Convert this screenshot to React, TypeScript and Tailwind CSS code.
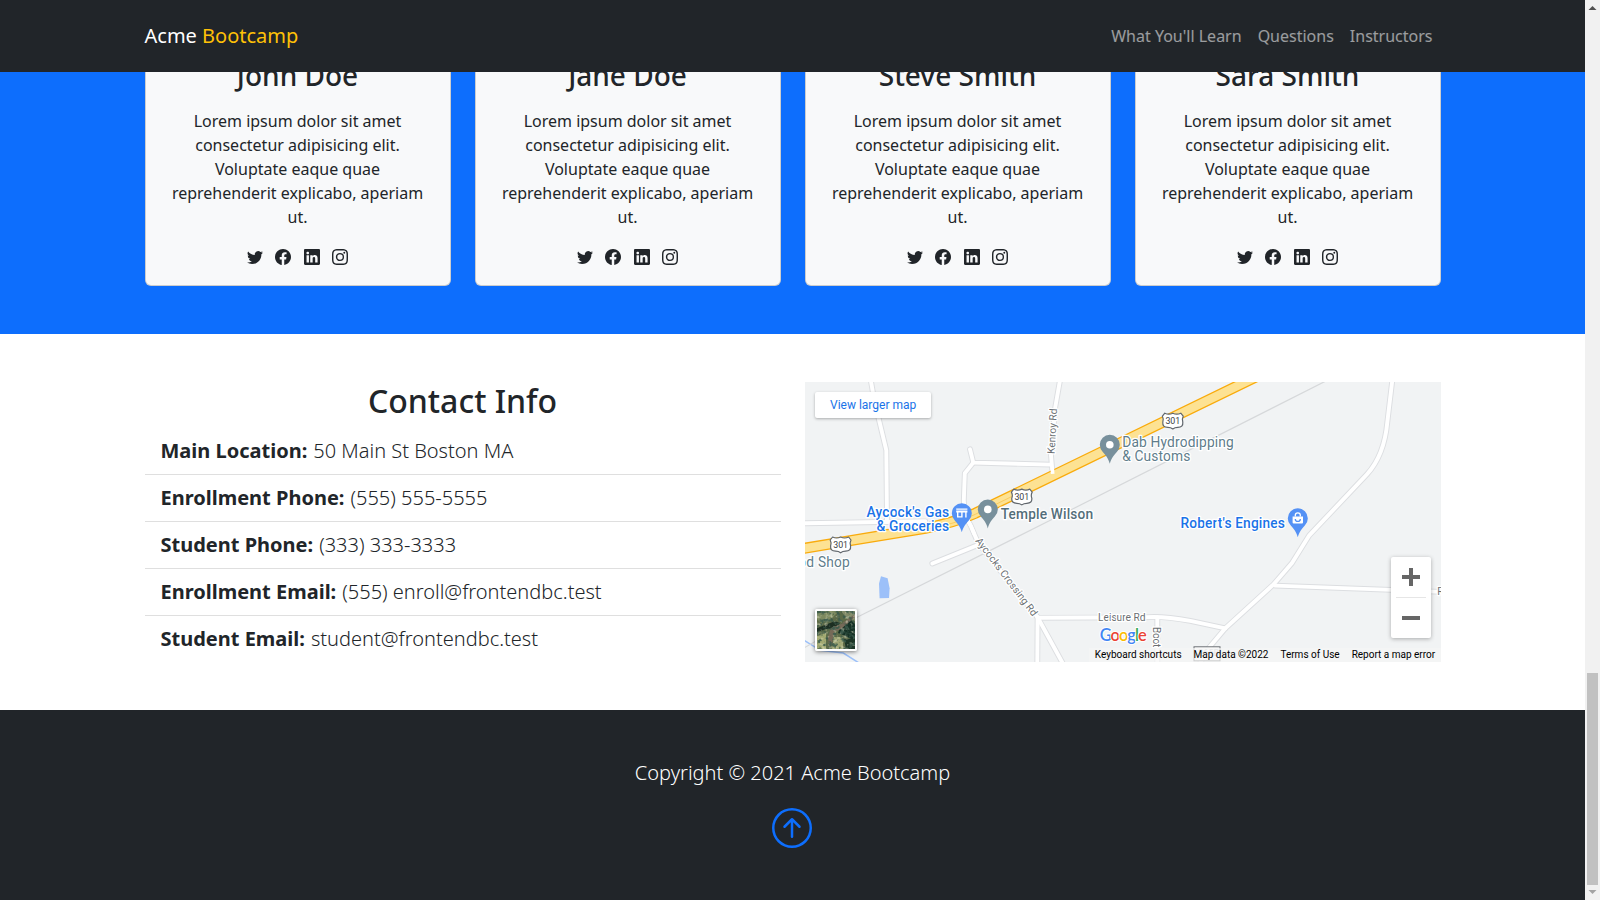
import React from "react";
import { BsTwitter, BsFacebook, BsLinkedin, BsInstagram, BsArrowUpCircle } from "react-icons/bs";

const navLinks = ["What You'll Learn", "Questions", "Instructors"];
const instructors = ["John Doe", "Jane Doe", "Steve Smith", "Sara Smith"];
const contacts = [
  ["Main Location:", "50 Main St Boston MA"],
  ["Enrollment Phone:", "(555) 555-5555"],
  ["Student Phone:", "(333) 333-3333"],
  ["Enrollment Email:", "(555) enroll@frontendbc.test"],
  ["Student Email:", "student@frontendbc.test"],
];

function Navbar() {
  return (
    <header className="z-10 h-[72px] shrink-0 bg-[#212529]">
      <div className="mx-auto flex h-full w-[1320px] items-center justify-between px-3">
        <a className="text-xl leading-[30px] text-white">
          Acme <span className="text-[#ffc107]">Bootcamp</span>
        </a>
        <nav className="flex">
          {navLinks.map((l) => (
            <a key={l} className="p-2 text-base leading-6 text-white/55">
              {l}
            </a>
          ))}
        </nav>
      </div>
    </header>
  );
}

function InstructorCard({ name }: { name: string }) {
  return (
    <div className="rounded-[6px] border border-black/[.175] bg-[#f8f9fa] bg-clip-border p-4 text-center">
      <h3 className="mb-4 text-[28px] leading-[33.6px] font-medium">{name}</h3>
      <p className="mb-4 px-[7px] text-base leading-6">
        Lorem ipsum dolor sit amet consectetur adipisicing elit. Voluptate eaque quae reprehenderit explicabo, aperiam
        ut.
      </p>
      <div className="flex h-6 items-center justify-center gap-[12.16px]">
        <BsTwitter />
        <BsFacebook />
        <BsLinkedin />
        <BsInstagram />
      </div>
    </div>
  );
}

const minorRoads = [
  "M870.5 380 L874 400 L886 450 L886.7 521.5",
  "M800 523 L925 521",
  "M969.7 449 L973 462.3 L1050 464.3",
  "M973 462.3 L964.5 473 L963.5 500 Q964 515 970.7 526 L978 543 L1037.3 617 L1063 664",
  "M1059.7 380 L1055 406.7 L1050.7 455 L1052.3 473",
  "M932 563.2 L977 545",
  "M1037.3 617 L1037 664",
  "M1037.3 617.5 L1145 617 Q1162 615.5 1190 620.5 L1225 628",
  "M1157 617 L1157 664",
  "M1392 380 L1387 422 Q1384 455 1366.7 474 L1309 535 L1291.7 562.7 L1273.3 584 L1225 628 L1209 647 L1199 664",
  "M1275 585.3 L1391 589.6 L1445 591.7",
];

const highway = "M795 549.5 L850 540.3 L925 528 Q955 522 975 513 L1260 374.5";

function Shield({ x, y }: { x: number; y: number }) {
  return (
    <g transform={`translate(${x} ${y})`}>
      <path
        d="M-8 -8 Q-4 -6 0 -8 Q4 -6 8 -8 L10.4 -5 Q8.8 -2 10 1 Q10.5 6.2 5 6.2 Q2 6.2 0 7.8 Q-2 6.2 -5 6.2 Q-10.5 6.2 -10 1 Q-8.8 -2 -10.4 -5 Z"
        fill="#fff"
        stroke="#60666c"
        strokeWidth="1.2"
        strokeLinejoin="round"
      />
      <text y="3.1" textAnchor="middle" fontSize="8.8" fill="#3c4043" textLength="14.6">
        301
      </text>
    </g>
  );
}

function Pin({ x, y, color, children }: { x: number; y: number; color: string; children: React.ReactNode }) {
  return (
    <g transform={`translate(${x} ${y})`}>
      <path d="M0 19 C-1.6 13 -4 11 -7 7.2 A10 10 0 1 1 7 7.2 C4 11 1.6 13 0 19 Z" fill={color} />
      {children}
    </g>
  );
}

function MapDrawing() {
  return (
    <svg className="block h-full w-full" viewBox="804.7 381.7 636 280" fontFamily="Roboto, sans-serif">
      <rect x="800" y="380" width="650" height="290" fill="#f1f3f4" />
      <path d="M880.7 576 L887.3 578 L889.3 588 L888.7 597.7 L879.3 598 L878.7 583.3 Z" fill="#9cc0f9" />
      <path d="M803 639.5 L820 650 L843 652.7 L860 663.5" fill="none" stroke="#9cc0f9" strokeWidth="1.5" />
      <path d="M803 648 L857.3 616.7 L1050 520 L1325 381" fill="none" stroke="#d6d8da" strokeWidth="1.2" />
      <g fill="none" stroke="#dcdee1" strokeWidth="5.8" strokeLinecap="round" strokeLinejoin="round">
        {minorRoads.map((d) => (
          <path key={d} d={d} />
        ))}
      </g>
      <g fill="none" stroke="#fff" strokeWidth="3.9" strokeLinecap="round" strokeLinejoin="round">
        {minorRoads.map((d) => (
          <path key={d} d={d} />
        ))}
      </g>
      <path d={highway} fill="none" stroke="#f9ab0c" strokeWidth="11" />
      <path d={highway} fill="none" stroke="#fde293" strokeWidth="8.4" />
      <path d="M925 529 Q955 524 975 514 L1012 496" fill="none" stroke="#f9c85a" strokeWidth="0.9" />
      <path d="M1052 467 L1052.4 473.5" stroke="#fff" strokeWidth="3.6" />
      <path d="M967 518 Q968 522 970.7 526 L974 534" fill="none" stroke="#fff" strokeWidth="3.6" />
      <Shield x={840.3} y={544.7} />
      <Shield x={1021.5} y={496.8} />
      <Shield x={1172.5} y={420.9} />

      <g stroke="#fff" strokeWidth="2.6" strokeLinejoin="round" paintOrder="stroke" fontSize="13.8">
        <g fill="#1a73e8" fontWeight="500" textAnchor="end">
          <text x="948.8" y="516.3" textLength="82.5">Aycock's Gas</text>
          <text x="948.8" y="530.3" textLength="72.5">&amp; Groceries</text>
          <text x="1284.6" y="528" textLength="104.5">Robert's Engines</text>
        </g>
        <text x="1000.4" y="519" textLength="92.5" fontWeight="500" fill="#546e7a">Temple Wilson</text>
        <g fill="#607d8b">
          <text x="1122" y="447.2" textLength="111.5">Dab Hydrodipping</text>
          <text x="1122" y="461.2" textLength="68">&amp; Customs</text>
          <text x="849.5" y="567" textAnchor="end" textLength="51.5">od Shop</text>
        </g>
        <g fill="#6b6f73" fontSize="10.3">
          <text transform="translate(1054.3 453.8) rotate(-87)" textLength="45.5">Kenroy Rd</text>
          <text transform="translate(974.6 540.6) rotate(52.8)" textLength="95.5">Aycocks Crossing Rd</text>
          <text x="1097.8" y="620.5" textLength="47.4">Leisure Rd</text>
          <text transform="translate(1152.8 626.6) rotate(90)" textLength="20.5">Boot</text>
          <text x="1437" y="594.6">R</text>
        </g>
      </g>
      <rect x="1193.7" y="646.5" width="26" height="14" fill="#fff" stroke="#6b6f73" />
      <text x="1198" y="656" fontSize="9" fill="#c4c7ca">265B</text>

      <Pin x={961.5} y={512.9} color="#5491f5">
        <path
          d="M-5.6 -4.8 H5.6 V-3.4 H-5.6 Z M-5.6 -2.6 H5.6 V-0.6 H4.8 V4.4 H3.4 V-0.6 H0.8 V4.4 H-4.8 V-0.6 H-5.6 Z M-3.4 -0.6 V3 H-0.6 V-0.6 Z"
          fill="#fff"
          fillRule="evenodd"
        />
      </Pin>
      <Pin x={987.5} y={509.1} color="#78909c">
        <circle r="3.8" fill="#fff" />
      </Pin>
      <Pin x={1109.5} y={444.4} color="#78909c">
        <circle r="3.8" fill="#fff" />
      </Pin>
      <Pin x={1297.5} y={518} color="#5491f5">
        <path d="M-5.2 -1.8 H5.2 V4.2 Q5.2 5.2 4.2 5.2 H-4.2 Q-5.2 5.2 -5.2 4.2 Z" fill="#fff" />
        <path d="M-2.5 -1.8 V-3 A2.5 2.5 0 0 1 2.5 -3 V-1.8" fill="none" stroke="#fff" strokeWidth="1.3" />
        <path d="M-2.5 0.6 A2.5 2.5 0 0 0 2.5 0.6" fill="none" stroke="#5491f5" strokeWidth="1.3" />
      </Pin>

      <text
        x="1099.4"
        y="640.3"
        fontFamily="Lato, sans-serif"
        fontSize="16.4"
        fontWeight="600"
        textLength="47"
        stroke="#fff"
        strokeWidth="2"
        paintOrder="stroke"
      >
        <tspan fill="#4285f4">G</tspan>
        <tspan fill="#ea4335">o</tspan>
        <tspan fill="#fbbc04">o</tspan>
        <tspan fill="#4285f4">g</tspan>
        <tspan fill="#34a853">l</tspan>
        <tspan fill="#ea4335">e</tspan>
      </text>
    </svg>
  );
}

function SatelliteThumb() {
  return (
    <svg className="block h-full w-full" viewBox="0 0 38 38">
      <filter id="shadows" x="0" y="0" width="100%" height="100%">
        <feTurbulence type="fractalNoise" baseFrequency="0.25" numOctaves="3" seed="5" />
        <feColorMatrix values="0 0 0 0 0.04  0 0 0 0 0.1  0 0 0 0 0.07  4.5 0 0 0 -2.2" />
      </filter>
      <filter id="highlights" x="0" y="0" width="100%" height="100%">
        <feTurbulence type="fractalNoise" baseFrequency="0.25" numOctaves="3" seed="5" />
        <feColorMatrix values="0 0 0 0 0.72  0 0 0 0 0.74  0 0 0 0 0.55  0 4 0 0 -2.1" />
      </filter>
      <filter id="soft">
        <feGaussianBlur stdDeviation="0.7" />
      </filter>
      <rect width="38" height="38" fill="#5d6b48" />
      <g filter="url(#soft)">
        <path d="M0 0 H22 L14 8 L4 12 L0 8 Z" fill="#7d8a5e" />
        <path d="M24 0 H38 V10 L30 8 Z" fill="#828a68" />
        <path d="M0 17 L8 14 L18 10 L23 12 L19 17 L10 18 L0 21 Z" fill="#1c2f24" />
        <path d="M24 13 L34 9 L38 13 V30 L28 25 L21 22 Z" fill="#173026" />
        <path d="M14 17 L24 13 L38 3 L38 6 L24 18 L17 21 L15 33 L12 36 L11 26 Z" fill="#766a58" />
        <path d="M0 25 L9 22 L9 38 H0 Z" fill="#a3aa72" />
        <path d="M17 26 L26 26 L26 38 H15 Z" fill="#a0a774" />
        <path d="M27 28 L38 28 V38 H29 Z" fill="#1d3528" />
      </g>
      <rect width="38" height="38" filter="url(#highlights)" opacity="0.5" />
      <rect width="38" height="38" filter="url(#shadows)" opacity="0.85" />
    </svg>
  );
}

function ContactMap() {
  return (
    <div className="relative h-[280px] w-[636px] overflow-hidden font-[Roboto,sans-serif] text-black">
      <MapDrawing />
      <a className="absolute top-[10px] left-[10px] flex h-[26px] w-[116px] items-center rounded-[2px] bg-white pl-[15.5px] text-xs text-[#1a73e8] shadow-[0_1px_3px_rgba(0,0,0,0.3)]">
        View larger map
      </a>
      <div className="absolute top-[227px] left-[10px] h-[42px] w-[42px] overflow-hidden rounded-[2px] border-2 border-white shadow-[0_1px_4px_rgba(0,0,0,0.5)]">
        <SatelliteThumb />
      </div>
      <div className="absolute top-[175px] right-[10px] flex h-[81px] w-10 flex-col items-center rounded-[2px] bg-white shadow-[0_1px_4px_rgba(0,0,0,0.3)]">
        <div className="flex h-10 items-center">
          <svg className="h-[18px] w-[18px]" viewBox="0 0 18 18">
            <path d="M7 0 H11 V7 H18 V11 H11 V18 H7 V11 H0 V7 H7 Z" fill="#666" />
          </svg>
        </div>
        <div className="h-px w-[30px] bg-[#e6e6e6]" />
        <div className="flex h-10 items-center">
          <div className="h-1 w-[18px] bg-[#666]" />
        </div>
      </div>
      <div className="absolute right-0 bottom-0 flex h-[14px] items-center gap-3 bg-[#f5f5f5]/70 pr-[5.4px] pl-[6px] text-[10px] leading-[14px] whitespace-nowrap">
        <span>Keyboard shortcuts</span>
        <span>Map data ©2022</span>
        <span>Terms of Use</span>
        <span>Report a map error</span>
      </div>
    </div>
  );
}

function Scrollbar() {
  return (
    <div className="flex h-full w-[15px] shrink-0 flex-col items-center bg-[#f1f1f1]">
      <svg className="h-[15px] w-[15px] shrink-0" viewBox="0 0 15 15">
        <path d="M7.5 6 L11.5 10 H3.5 Z" fill="#505050" />
      </svg>
      <div className="grow" />
      <div className="h-[212px] w-[11px] bg-[#c1c1c1]" />
      <svg className="h-[15px] w-[15px] shrink-0" viewBox="0 0 15 15">
        <path d="M3.5 5 H11.5 L7.5 9 Z" fill="#a3a3a3" />
      </svg>
    </div>
  );
}

export default function App() {
  return (
    <div className="flex h-screen w-full overflow-hidden bg-white font-['Noto_Sans',sans-serif] text-[#212529]">
      <div className="flex min-w-0 grow flex-col">
        <Navbar />
        <section className="flex h-[262px] shrink-0 items-end overflow-hidden bg-[#0d6efd] pb-12">
          <div className="mx-auto grid w-[1320px] grid-cols-4 gap-6 px-3">
            {instructors.map((name) => (
              <InstructorCard key={name} name={name} />
            ))}
          </div>
        </section>
        <section className="h-[376px] shrink-0 pt-12">
          <div className="mx-auto grid w-[1320px] grid-cols-2 gap-6 px-3">
            <div>
              <h2 className="mb-2 text-center text-[32px] leading-[38.4px] font-medium">Contact Info</h2>
              <ul className="text-xl leading-[30px] font-light">
                {contacts.map(([label, value]) => (
                  <li key={label} className="border-b border-black/[.125] px-4 py-2 last:border-b-0">
                    <span className="mr-[0.8px] font-bold">{label}</span> {value}
                  </li>
                ))}
              </ul>
            </div>
            <ContactMap />
          </div>
        </section>
        <footer className="flex grow flex-col items-center bg-[#212529] pt-12 text-white">
          <p className="mb-5 text-xl leading-[30px] font-light">Copyright © 2021 Acme Bootcamp</p>
          <BsArrowUpCircle className="mr-px h-10 w-10 text-[#0d6efd]" />
        </footer>
      </div>
      <Scrollbar />
    </div>
  );
}
